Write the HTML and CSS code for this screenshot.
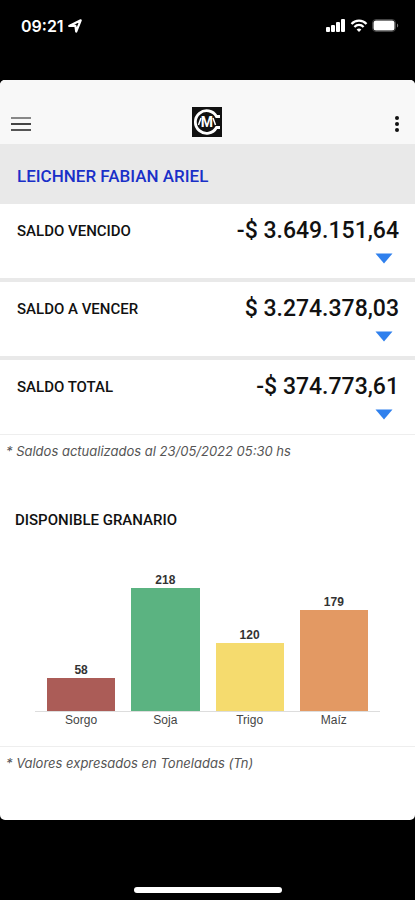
FILE: index.html
```html
<!DOCTYPE html>
<html lang="es">
<head>
    <meta charset="UTF-8">
    <meta name="viewport" content="width=device-width, initial-scale=1.0">
    <title>Saldos</title>
    <link rel="stylesheet" href="styles.css">
</head>
<body>

    <div class="status-bar">
        <div class="status-left">
            <span>09:21</span>
            <svg width="14" height="14" viewBox="0 0 14 14"><path d="M1.2 7 L12.7 1.3 L8.2 12.6 L7.4 6.8 Z" fill="none" stroke="#fff" stroke-width="2.2" stroke-linejoin="round"/></svg>
        </div>
        <div class="status-right">
            <svg width="20" height="14" viewBox="0 0 20 14" fill="#fff">
                <rect x="0" y="8" width="4" height="5" rx="1"/>
                <rect x="5" y="6" width="4" height="7" rx="1"/>
                <rect x="10" y="3" width="4" height="10" rx="1"/>
                <rect x="15" y="0" width="4" height="13" rx="1"/>
            </svg>
            <svg width="18" height="14" viewBox="0 0 18 14" fill="none" stroke="#fff" stroke-width="2.2">
                <path d="M1.5 5 C5.5 0.6 12.5 0.6 16.5 5"/>
                <path d="M4.4 8 C7 5.2 11 5.2 13.6 8"/>
                <path d="M9 13 L6.6 10.4 C8 9.2 10 9.2 11.4 10.4 Z" fill="#fff" stroke="none"/>
            </svg>
            <svg width="27" height="14" viewBox="0 0 27 14">
                <rect x="0.5" y="0.5" width="23" height="12" rx="3.5" fill="none" stroke="#444"/>
                <rect x="1.5" y="1.5" width="21" height="10" rx="2.5" fill="#fff"/>
                <path d="M25 4.5 C26.6 5.2 26.6 7.8 25 8.5 Z" fill="#777"/>
            </svg>
        </div>
    </div>

    <main class="app">
        <header class="app-header">
            <button class="icon-button" aria-label="Menú">
                <svg width="22" height="18" viewBox="0 0 22 18" stroke-width="2">
                    <path d="M1 3 H21" stroke="#888"/>
                    <path d="M1 9 H21" stroke="#444"/>
                    <path d="M1 15 H21" stroke="#555"/>
                </svg>
            </button>
            <svg class="logo" width="30" height="30" viewBox="0 0 30 30">
                <rect width="30" height="30" fill="#111"/>
                <path d="M28 9.5 H24.5 A11.3 11.3 0 1 0 24.5 20.5 H28" fill="none" stroke="#fff" stroke-width="2.8"/>
                <text class="logo-text" x="15" y="20" text-anchor="middle">M</text>
                <path d="M6.5 18 L9 11 M23.5 18 L21 11" fill="none" stroke="#fff" stroke-width="1.5"/>
            </svg>
            <button class="icon-button more" aria-label="Más opciones">
                <svg width="6" height="18" viewBox="0 0 6 18" fill="#111">
                    <circle cx="3" cy="3" r="2"/>
                    <circle cx="3" cy="9" r="2"/>
                    <circle cx="3" cy="15" r="2"/>
                </svg>
            </button>
        </header>

        <h1 class="client">LEICHNER FABIAN ARIEL</h1>

        <section class="balance">
            <h2>SALDO VENCIDO</h2>
            <div class="balance-value">
                <span class="amount">-$ 3.649.151,64</span>
                <button class="expand" aria-label="Ver saldo vencido"><svg width="18" height="11" viewBox="0 0 18 11"><path d="M0.5 0.5 H17.5 L9 10.5 Z" fill="#2f80ed"/></svg></button>
            </div>
        </section>
        <section class="balance">
            <h2>SALDO A VENCER</h2>
            <div class="balance-value">
                <span class="amount">$ 3.274.378,03</span>
                <button class="expand" aria-label="Ver saldo a vencer"><svg width="18" height="11" viewBox="0 0 18 11"><path d="M0.5 0.5 H17.5 L9 10.5 Z" fill="#2f80ed"/></svg></button>
            </div>
        </section>
        <section class="balance">
            <h2>SALDO TOTAL</h2>
            <div class="balance-value">
                <span class="amount">-$ 374.773,61</span>
                <button class="expand" aria-label="Ver saldo total"><svg width="18" height="11" viewBox="0 0 18 11"><path d="M0.5 0.5 H17.5 L9 10.5 Z" fill="#2f80ed"/></svg></button>
            </div>
        </section>
        <p class="note">* Saldos actualizados al 23/05/2022 05:30 hs</p>

        <section class="stock">
            <h2>DISPONIBLE GRANARIO</h2>
            <div class="chart">
                <div class="column">
                    <span class="value">58</span>
                    <div class="bar sorgo" style="height: 33px"></div>
                </div>
                <div class="column">
                    <span class="value">218</span>
                    <div class="bar soja" style="height: 123px"></div>
                </div>
                <div class="column">
                    <span class="value">120</span>
                    <div class="bar trigo" style="height: 68px"></div>
                </div>
                <div class="column">
                    <span class="value">179</span>
                    <div class="bar maiz" style="height: 101px"></div>
                </div>
            </div>
            <div class="labels">
                <span>Sorgo</span>
                <span>Soja</span>
                <span>Trigo</span>
                <span>Maíz</span>
            </div>
        </section>
        <p class="note">* Valores expresados en Toneladas (Tn)</p>
    </main>

    <div class="home-area">
        <div class="home-indicator"></div>
    </div>

</body>
</html>
```
FILE: styles.css
```css
* {
    box-sizing: border-box;
}

body {
    font-family: Roboto, "Liberation Sans", sans-serif;
    background-color: #000;
    color: #111;
    margin: 0;
    min-height: 100vh;
    display: flex;
    flex-direction: column;
}

h1, h2, p {
    margin: 0;
}

button {
    border: none;
    background: none;
    padding: 0;
    cursor: pointer;
}

svg {
    display: block;
}

/* Phone status bar */
.status-bar {
    display: flex;
    justify-content: space-between;
    align-items: flex-start;
    height: 80px;
    padding: 16px 16px 0 21px;
    color: #fff;
}

.status-left, .status-right {
    display: flex;
    align-items: center;
    gap: 4px;
    height: 20px;
}

.status-left {
    font-family: Inter, sans-serif;
    font-size: 16px;
    font-weight: 600;
}

/* App */
.app {
    flex: 1;
    background-color: #fff;
    border-radius: 5px;
    overflow: hidden;
}

.app-header {
    display: flex;
    justify-content: space-between;
    align-items: flex-end;
    height: 64px;
    padding: 0 15px 7px 10px;
    background-color: #f8f8f8;
}

.icon-button {
    display: flex;
    align-items: center;
    height: 26px;
}

.more {
    justify-content: flex-end;
    width: 18px;
}

.logo-text {
    font-size: 14px;
    font-weight: 700;
    fill: #fff;
}

.client {
    padding: 22px 17px 18px;
    background-color: #e9e9e9;
    color: #1a30c8;
    font-size: 17px;
    font-weight: 500;
    line-height: 20px;
}

.balance {
    display: flex;
    justify-content: space-between;
    padding: 13px 16px 14px 17px;
    border-bottom: 4px solid #e9e9e9;
}

.balance:nth-of-type(3) {
    border-bottom: 1px solid #eee;
}

h2 {
    font-size: 15px;
    font-weight: 500;
    line-height: 28px;
}

.balance-value {
    display: flex;
    flex-direction: column;
    align-items: flex-end;
    gap: 8px;
}

.amount {
    font-size: 23px;
    font-weight: 500;
    line-height: 28px;
}

.expand {
    margin-right: 6px;
}

.note {
    padding: 6px;
    color: #555;
    font-family: Inter, sans-serif;
    font-size: 13px;
    font-weight: 400;
    font-style: italic;
    line-height: 20px;
}

/* Grain chart */
.stock {
    padding: 39px 15px 18px;
    border-bottom: 1px solid #eee;
}

.chart, .labels {
    display: flex;
    gap: 16px;
    margin: 0 20px;
    padding: 0 12px;
}

.chart {
    align-items: flex-end;
    height: 178px;
    border-bottom: 1px solid #ddd;
}

.column, .labels span {
    flex: 1;
    text-align: center;
}

.value {
    display: block;
    font-family: "Liberation Sans", Arial, sans-serif;
    font-size: 12px;
    font-weight: 700;
    line-height: 16px;
    color: #333;
}

.sorgo { background-color: #ab5c57; }
.soja { background-color: #5bb381; }
.trigo { background-color: #f5db6e; }
.maiz { background-color: #e39963; }

.labels {
    font-family: "Liberation Sans", Arial, sans-serif;
    font-size: 12px;
    line-height: 16px;
    color: #444;
}

/* Home indicator */
.home-area {
    display: flex;
    justify-content: center;
    align-items: flex-end;
    height: 80px;
    padding-bottom: 7px;
}

.home-indicator {
    width: 148px;
    height: 6px;
    border-radius: 3px;
    background-color: #fff;
}
```
